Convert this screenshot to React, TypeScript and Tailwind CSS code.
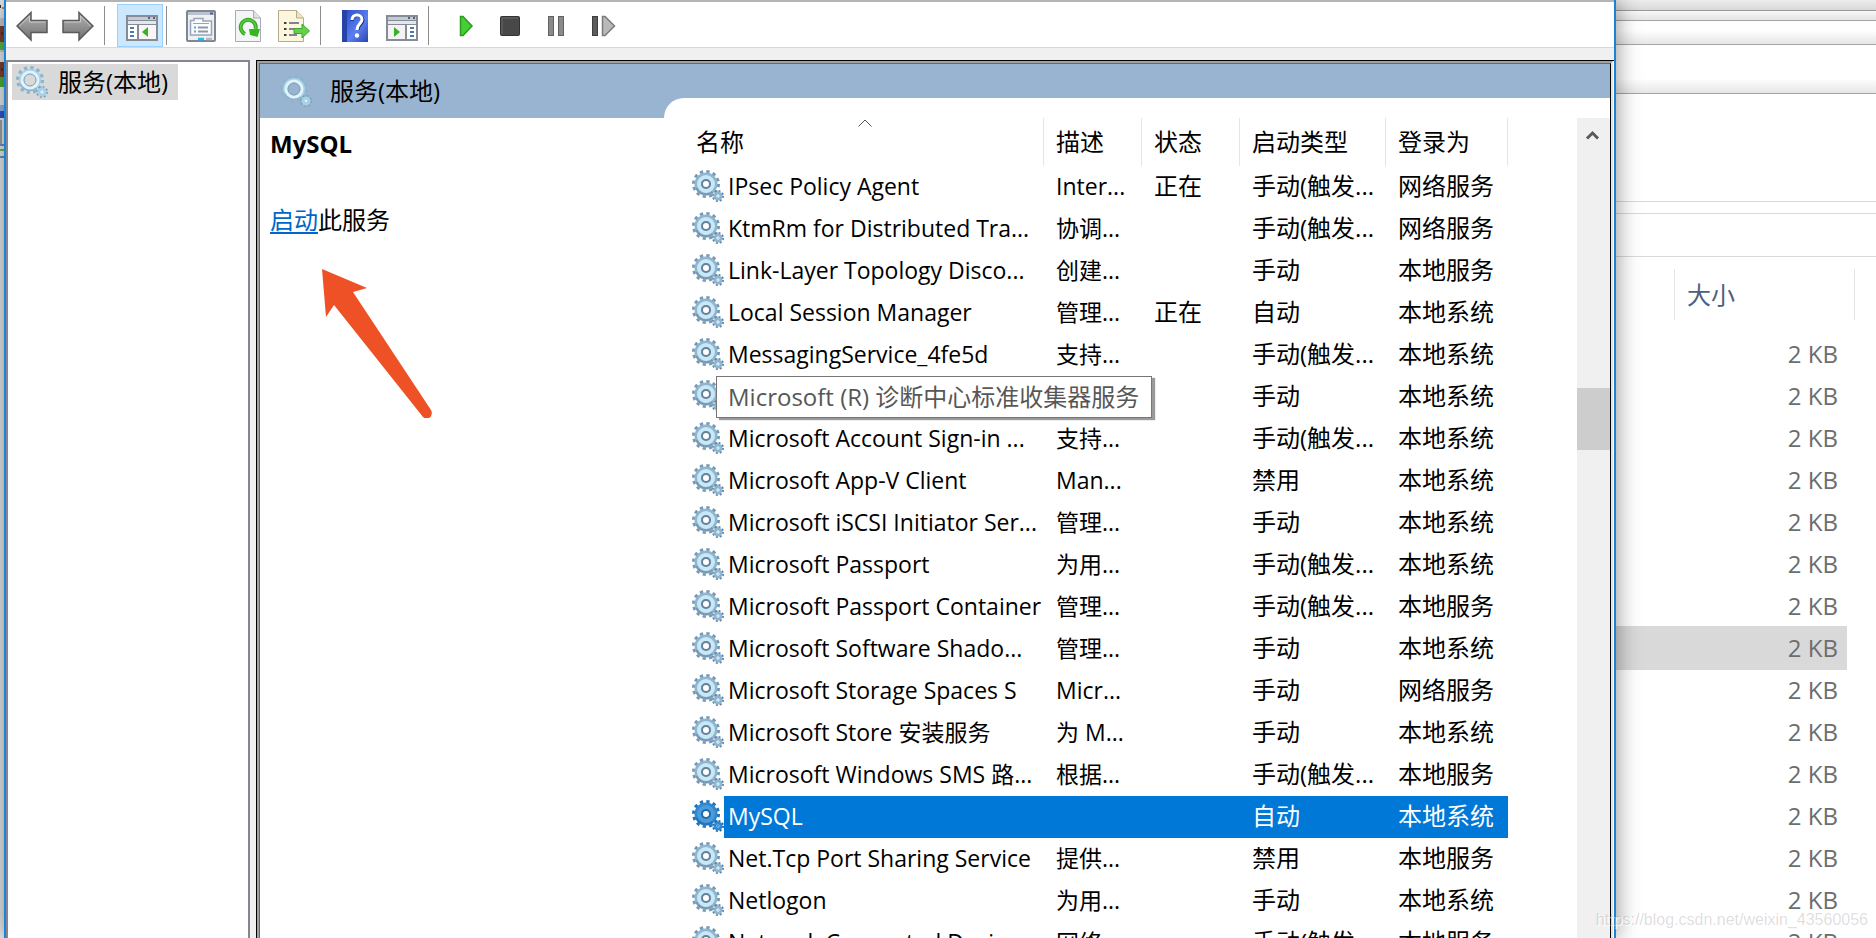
import type { ReactNode } from 'react';

interface Service {
  name: string;
  desc: string;
  status?: string;
  startup: string;
  logon: string;
  selected?: boolean;
}

const services: Service[] = [
  { name: 'IPsec Policy Agent', desc: 'Inter...', status: '正在', startup: '手动(触发...', logon: '网络服务' },
  { name: 'KtmRm for Distributed Tra...', desc: '协调...', startup: '手动(触发...', logon: '网络服务' },
  { name: 'Link-Layer Topology Disco...', desc: '创建...', startup: '手动', logon: '本地服务' },
  { name: 'Local Session Manager', desc: '管理...', status: '正在', startup: '自动', logon: '本地系统' },
  { name: 'MessagingService_4fe5d', desc: '支持...', startup: '手动(触发...', logon: '本地系统' },
  { name: '', desc: '', startup: '手动', logon: '本地系统' },
  { name: 'Microsoft Account Sign-in ...', desc: '支持...', startup: '手动(触发...', logon: '本地系统' },
  { name: 'Microsoft App-V Client', desc: 'Man...', startup: '禁用', logon: '本地系统' },
  { name: 'Microsoft iSCSI Initiator Ser...', desc: '管理...', startup: '手动', logon: '本地系统' },
  { name: 'Microsoft Passport', desc: '为用...', startup: '手动(触发...', logon: '本地系统' },
  { name: 'Microsoft Passport Container', desc: '管理...', startup: '手动(触发...', logon: '本地服务' },
  { name: 'Microsoft Software Shado...', desc: '管理...', startup: '手动', logon: '本地系统' },
  { name: 'Microsoft Storage Spaces S', desc: 'Micr...', startup: '手动', logon: '网络服务' },
  { name: 'Microsoft Store 安装服务', desc: '为 M...', startup: '手动', logon: '本地系统' },
  { name: 'Microsoft Windows SMS 路...', desc: '根据...', startup: '手动(触发...', logon: '本地服务' },
  { name: 'MySQL', desc: '', startup: '自动', logon: '本地系统', selected: true },
  { name: 'Net.Tcp Port Sharing Service', desc: '提供...', startup: '禁用', logon: '本地服务' },
  { name: 'Netlogon', desc: '为用...', startup: '手动', logon: '本地系统' },
  { name: 'Network Connected Devi...', desc: '网络...', startup: '手动(触发...', logon: '本地服务' },
];

const columns = ['描述', '状态', '启动类型', '登录为'];

const SELECTED_FILE = 7;

const Gear = ({ tone = 'normal' }: { tone?: 'normal' | 'pale' | 'selected' }) => {
  const tones = {
    normal: { teeth: '#7899b6', body: '#8fb6d0', ring: '#c9e8f5', rim: '#6581a0', hole: '#ffffff' },
    pale: { teeth: '#8fb3cc', body: '#a5d2e8', ring: '#dff3fa', rim: '#829fb4', hole: 'none' },
    selected: { teeth: '#1f74bb', body: '#2f87cd', ring: '#4a9bdb', rim: '#2068aa', hole: '#ffffff' },
  };
  const c = tones[tone];
  const pale = tone === 'pale';

  return (
    <svg viewBox="0 0 32 32" className="block size-8 shrink-0" fill="none">
      <circle cx="14" cy="14" r="12" stroke={c.teeth} strokeWidth="4" strokeDasharray="3.14 3.14" />
      <circle cx="14" cy="14" r={pale ? 9 : 8} stroke={c.body} strokeWidth={pale ? 4 : 7} />
      <path d="M4.500 18a10.500 10.500 0 0 0 16 4" stroke={c.teeth} strokeWidth="2" />
      <circle cx="14" cy="14" r={pale ? 8 : 7} stroke={c.ring} strokeWidth={pale ? 3 : 4} />
      <circle cx="14" cy="14" r={pale ? 6 : 4} fill={c.hole} stroke={c.rim} strokeWidth={pale ? 1 : 2} />
      <circle cx="26" cy="26" r="4.800" stroke={c.rim} strokeWidth="2.400" strokeDasharray="1.880 1.880" />
      <circle cx="26" cy="26" r="3" stroke={c.body} strokeWidth="3" />
      <circle cx="26" cy="26" r="1.400" fill={c.ring} />
    </svg>
  );
};

const Arrow = ({ flip }: { flip?: boolean }) => (
  <svg viewBox="0 0 32 32" className={`size-8 ${flip ? '-scale-x-100' : ''}`}>
    <defs>
      <linearGradient id="arrow" x1="0" y1="0" x2="0" y2="1">
        <stop offset="0" stopColor="#b5b5b5" />
        <stop offset="1" stopColor="#6f6f6f" />
      </linearGradient>
    </defs>
    <path d="M1 16 15 2.500V10.500H31V22.500H15V30z" fill="url(#arrow)" stroke="#5a5a5a" strokeWidth="1.500" />
    <path d="M3.500 16 13.500 6V12H29.500" fill="none" stroke="#c9c9c9" />
  </svg>
);

const TreeIcon = () => (
  <svg viewBox="0 0 32 32" className="size-8" shapeRendering="crispEdges">
    <rect x="0" y="5" width="32" height="26" fill="#868b95" />
    <rect x="2" y="7" width="28" height="3" fill="#c3cbd6" />
    <path d="M22 7h2v2h-2zM27 7h2v2h-2z" fill="#51627c" />
    <rect x="2" y="11" width="28" height="3" fill="#e4e7eb" />
    <rect x="2" y="15" width="9" height="14" fill="#fff" />
    <rect x="13" y="15" width="17" height="14" fill="#f6f6f6" />
    <path d="M4 17h4v2H4zM4 21h4v2H4zM4 25h4v2H4z" fill="#4a78b5" />
    <path d="M22 17v10l-6-5z" fill="#3fae29" shapeRendering="auto" />
  </svg>
);

const ActionPaneIcon = () => (
  <svg viewBox="0 0 32 32" className="size-8" shapeRendering="crispEdges">
    <rect x="0" y="5" width="32" height="26" fill="#868b95" />
    <rect x="2" y="7" width="28" height="3" fill="#c3cbd6" />
    <path d="M22 7h2v2h-2zM27 7h2v2h-2z" fill="#51627c" />
    <rect x="2" y="11" width="28" height="3" fill="#e4e7eb" />
    <rect x="2" y="15" width="17" height="14" fill="#f3f3f3" />
    <rect x="21" y="15" width="9" height="14" fill="#fff" />
    <path d="M24 17h4v2h-4zM24 21h4v2h-4zM24 25h4v2h-4z" fill="#4a78b5" />
    <path d="M8 17v10l6-5z" fill="#3fae29" shapeRendering="auto" />
  </svg>
);

const PropertiesIcon = () => (
  <svg viewBox="0 0 32 32" className="size-8" fill="none">
    <rect x="1" y="1" width="28" height="30" rx="1" fill="#eef0f2" stroke="#7e8691" strokeWidth="2" />
    <path d="M2 3.500H28" stroke="#b9c3d0" strokeWidth="3" />
    <path d="M24 3.500h3" stroke="#51627c" strokeWidth="2" />
    <path d="M4.500 25V10.500H8V8.500H17V11H25.500V25z" fill="#fafbfc" stroke="#9aa3bd" strokeWidth="1.500" />
    <path d="M7 13.500H23" stroke="#9aa3bd" />
    <path d="M8 17.500h2" stroke="#18c4f0" strokeWidth="2" />
    <path d="M8 21.500h2M12 17.500H22M12 21.500H22" stroke="#8d98a8" strokeWidth="2" />
    <path d="M12 29h6" stroke="#18c4f0" strokeWidth="2.500" />
    <path d="M20 29h6" stroke="#b4bac1" strokeWidth="2.500" />
  </svg>
);

const RefreshIcon = () => (
  <svg viewBox="0 0 32 32" className="size-8" fill="none">
    <path d="M3.500 .5H21.500L28.500 8V31.500H3.500z" fill="#f4f5f6" stroke="#a9abae" />
    <path d="M21.500 .5V8H28.500" fill="#dfe1e3" stroke="#a9abae" />
    <path d="M13 24A7.500 7.500 0 1 1 23.500 19" stroke="#35a823" strokeWidth="4" />
    <path d="M13 24A7.500 7.500 0 1 1 23.500 19" stroke="#57cc40" strokeWidth="1.500" />
    <path d="M17 19 28 19 25.500 27 18 25z" fill="#35b51f" />
  </svg>
);

const ExportIcon = () => (
  <svg viewBox="0 0 32 32" className="size-8" fill="none">
    <path d="M.5 .5H18.500L25.500 8V31.500H.5z" fill="#fcf6dc" stroke="#b5ab93" />
    <path d="M18.500 .5V8H25.500" fill="#eee3bf" stroke="#b5ab93" />
    <path d="M6 13h2.500M6 19h2.500M6 25h2.500" stroke="#3c3c46" strokeWidth="2" />
    <path d="M11 13H21M11 19H17M11 25H19" stroke="#84809c" strokeWidth="2" />
    <path d="M16 18.500H24V14L31.500 21 24 28V23.500H16z" fill="#62d048" stroke="#3fa62c" />
  </svg>
);

const HelpIcon = () => (
  <svg viewBox="0 0 32 32" className="size-8" fill="none">
    <defs>
      <linearGradient id="help" x1="0" y1="0" x2="1" y2="1">
        <stop offset="0" stopColor="#2747c4" />
        <stop offset=".6" stopColor="#5b7ff0" />
        <stop offset="1" stopColor="#2b45ae" />
      </linearGradient>
    </defs>
    <rect x="2" width="26" height="32" fill="url(#help)" />
    <path d="M2 0H7V32H2z" fill="#2743a8" />
    <path d="M12 11C12 3.500 23 4 23 10C23 14 18 14.500 18 20" stroke="#1d2f80" strokeWidth="3" />
    <path d="M12 10C12 3 22 3.500 22 9.500C22 13.500 17 14 17 20" stroke="#fff" strokeWidth="3" />
    <circle cx="17" cy="25.500" r="2.200" fill="#fff" />
  </svg>
);

const PlayIcon = () => (
  <svg viewBox="0 0 32 32" className="size-8">
    <path d="M12.500 6.500H15L24 16 15 25.500H12.500z" fill="#45cf33" stroke="#2c9a20" strokeWidth="1.500" />
  </svg>
);

const StopIcon = () => (
  <svg viewBox="0 0 32 32" className="size-8">
    <rect x="6.500" y="6.500" width="19" height="19" rx="1" fill="#484848" stroke="#333" />
    <path d="M8 24V8H24" fill="none" stroke="#6b6b6b" />
  </svg>
);

const PauseIcon = () => (
  <svg viewBox="0 0 32 32" className="size-8" fill="#8a8a8a" stroke="#626262">
    <rect x="8.500" y="6.500" width="5" height="19" />
    <rect x="18.500" y="6.500" width="5" height="19" />
  </svg>
);

const RestartIcon = () => (
  <svg viewBox="0 0 32 32" className="size-8">
    <rect x="6.500" y="6.500" width="5" height="19" fill="#5c5c5c" stroke="#3e3e3e" />
    <path d="M16.500 6.500H19L28.500 16 19 25.500H16.500z" fill="#b9b9b9" stroke="#7b7b7b" strokeWidth="1.500" />
  </svg>
);

const ToolButton = ({ label, active, children }: { label: string; active?: boolean; children: ReactNode }) => (
  <button
    type="button"
    aria-label={label}
    className={`flex w-[46px] items-center justify-center border ${
      active ? 'border-[#99d1ff] bg-[#cce8ff] pl-1' : 'border-transparent'
    }`}
  >
    {children}
  </button>
);

const Separator = () => <div className="my-0.5 mr-3 ml-[3px] w-px bg-[#8c8c8c]" />;

const Toolbar = () => (
  <div className="flex h-12 shrink-0 border-t-2 border-b border-t-[#b4b4b4] border-b-[#d8d8d8] bg-white pt-0.5 pl-[3px]">
    <ToolButton label="后退"><Arrow /></ToolButton>
    <ToolButton label="前进"><Arrow flip /></ToolButton>
    <Separator />
    <ToolButton label="显示/隐藏控制台树" active><TreeIcon /></ToolButton>
    <Separator />
    <ToolButton label="属性"><PropertiesIcon /></ToolButton>
    <ToolButton label="刷新"><RefreshIcon /></ToolButton>
    <ToolButton label="导出列表"><ExportIcon /></ToolButton>
    <Separator />
    <ToolButton label="帮助"><HelpIcon /></ToolButton>
    <ToolButton label="显示/隐藏操作窗格"><ActionPaneIcon /></ToolButton>
    <Separator />
    <ToolButton label="启动服务"><PlayIcon /></ToolButton>
    <ToolButton label="停止服务"><StopIcon /></ToolButton>
    <ToolButton label="暂停服务"><PauseIcon /></ToolButton>
    <ToolButton label="重启动服务"><RestartIcon /></ToolButton>
  </div>
);

const ConsoleTree = () => (
  <nav className="w-[244px] shrink-0 border-2 border-b-0 border-[#848790] bg-white px-1 pt-0.5">
    <button type="button" className="flex h-9 items-center bg-[#d9d9d9] pr-2.5 pl-1">
      <Gear tone="pale" />
      <span className="ml-2.5">服务(本地)</span>
    </button>
  </nav>
);

const ServiceInfo = () => (
  <div className="flex w-[404px] shrink-0 flex-col">
    <div className="flex h-[54px] items-center gap-[18px] bg-[#99b4d1] pl-5">
      <Gear tone="pale" />
      <h1>服务(本地)</h1>
    </div>
    <div className="px-2.5 pt-1.5">
      <h2 className="font-bold">MySQL</h2>
      <p className="mt-9">
        <a href="#start" className="text-[#0066cc] underline decoration-2 underline-offset-3">启动</a>
        此服务
      </p>
    </div>
    <svg viewBox="0 0 112 150" className="mt-7 ml-[61px] h-[150px] w-28" fill="#ee5126">
      <path d="M1 1 46 20 32 24 110 142C113 147 107 154 102 149L13 37 5 49z" />
    </svg>
  </div>
);

const ServiceRow = ({ service }: { service: Service }) => {
  const cell = service.selected ? 'bg-[#0078d7] text-white' : '';

  return (
    <tr className="h-[42px] align-top">
      <td className="p-0 pt-1">
        <Gear tone={service.selected ? 'selected' : 'normal'} />
      </td>
      <td className={`p-0 pl-1 text-[23px]/10 ${cell}`}>{service.name}</td>
      <td className={`p-0 pl-3 text-[23px]/10 ${cell}`}>{service.desc}</td>
      <td className={`p-0 pl-3 ${cell}`}>{service.status}</td>
      <td className={`p-0 pl-3 ${cell}`}>{service.startup}</td>
      <td className={`p-0 pl-3 ${cell}`}>{service.logon}</td>
    </tr>
  );
};

const ServiceList = () => (
  <div className="flex min-w-0 flex-1 flex-col bg-[#99b4d1] pt-[34px]">
    <div className="flex min-h-0 flex-1 justify-between rounded-tl-[20px] bg-white pt-5 pl-7">
      <div className="relative">
        <table className="w-[816px] table-fixed border-separate border-spacing-0 whitespace-nowrap">
          <colgroup>
            <col className="w-8" />
            <col className="w-80" />
            <col className="w-[98px]" />
            <col className="w-[98px]" />
            <col className="w-[146px]" />
            <col className="w-[122px]" />
          </colgroup>
          <thead>
            <tr className="h-12 text-left">
              <th colSpan={2} className="relative border-r border-[#e5e5e5] p-0 pl-1 font-normal">
                名称
                <svg viewBox="0 0 14 8" className="absolute top-px left-[166px] h-2 w-3.5" fill="none">
                  <path d="M.5 7.500 7 1 13.500 7.500" stroke="#555" />
                </svg>
              </th>
              {columns.map((title) => (
                <th key={title} className="border-r border-[#e5e5e5] p-0 pl-3 font-normal">{title}</th>
              ))}
            </tr>
          </thead>
          <tbody>
            {services.map((service, i) => (
              <ServiceRow key={i} service={service} />
            ))}
          </tbody>
        </table>
        <div
          role="tooltip"
          className="absolute top-[258px] left-6 h-[42px] w-[436px] border border-[#767676] bg-white pl-[11px] whitespace-nowrap text-[#575757] shadow-[3px_2px_1px_#9a9a9a]"
        >
          Microsoft (R) 诊断中心标准收集器服务
        </div>
      </div>
      <div className="w-[33px] shrink-0 bg-[#f0f0f0]">
        <svg viewBox="0 0 33 34" className="h-[34px] w-full" fill="none">
          <path d="M10 20.500 15.500 15 21 20.500" stroke="#5a5a5a" strokeWidth="3" />
        </svg>
        <div className="mt-[236px] h-[62px] bg-[#cdcdcd]" />
      </div>
    </div>
  </div>
);

const ServicesWindow = () => (
  <div className="relative z-10 flex min-w-0 flex-1 flex-col border-x-2 border-[#1883d7] bg-[#f0f0f0] shadow-[0_0_22px_rgba(0,0,0,0.45)]">
    <Toolbar />
    <div className="mt-3 flex min-h-0 flex-1 gap-1.5">
      <ConsoleTree />
      <div className="flex min-w-0 flex-1 border-t border-l border-black bg-white pr-px">
        <div className="flex min-w-0 flex-1 border-t-2 border-r-2 border-l-2 border-[#a0a0a0] border-r-[#e3e3e3]">
          <div className="flex min-w-0 flex-1 border-t border-r border-l border-[#696969] border-r-black">
            <ServiceInfo />
            <ServiceList />
          </div>
        </div>
      </div>
    </div>
  </div>
);

const FilesWindow = () => (
  <div className="flex w-[260px] shrink-0 flex-col bg-white">
    <div className="h-[11px] shrink-0 border-b border-[#999] bg-linear-to-b from-[#ececec] to-[#d9d9d9]" />
    <div className="h-2.5 shrink-0 border-b border-[#a5a5a5] bg-linear-to-b from-[#f8f8f8] to-[#e4e4e4]" />
    <div className="h-6 shrink-0 border-b border-[#a5a5a5] bg-linear-to-b from-white from-40% to-[#e6e6e6]" />
    <div className="h-[49px] shrink-0 border-b border-[#a5a5a5] bg-linear-to-b from-white from-70% to-[#e6e6e6]" />
    <div className="h-[108px] shrink-0 border-b border-[#d9d9d9]" />
    <div className="h-3 shrink-0 border-b border-[#d9d9d9]" />
    <div className="h-[43px] shrink-0 border-b border-[#d9d9d9]" />
    <div className="mt-3 flex h-[51px] shrink-0 items-center pr-[21px] pl-[58px] text-[#4c607a]">
      <h2 className="h-full flex-1 border-x border-[#e5e5e5] pl-3 leading-[51px]">大小</h2>
    </div>
    <ul className="mt-[13px] mr-[30px] text-right leading-[42px] text-[#6d6d6d]">
      {Array.from({ length: 15 }, (_, i) => (
        <li
          key={i}
          className={`h-[42px] pr-2 ${
            i === SELECTED_FILE ? 'bg-[#d9d9d9] shadow-[0_0_0_1px_#d9d9d9]' : ''
          }`}
        >
          2 KB
        </li>
      ))}
    </ul>
  </div>
);

// Sliver of the desktop icons behind the window
const DesktopEdge = () => (
  <svg viewBox="0 0 4 180" className="h-[180px] w-1 shrink-0" shapeRendering="crispEdges">
    <rect width="4" height="180" fill="#ececec" />
    <rect y="5" width="1" height="3" fill="#333" />
    <rect x="2" y="7" width="2" height="2" fill="#d9961f" />
    <rect y="18" width="4" height="34" fill="#cfcfcf" />
    <rect y="26" width="4" height="17" fill="#84402f" />
    <rect x="1" y="32" width="2" height="3" fill="#5d2d22" />
    <rect y="42" width="4" height="8" fill="#5cbc3f" />
    <rect y="62" width="4" height="15" fill="#84402f" />
    <rect x="1" y="68" width="2" height="3" fill="#5d2d22" />
    <rect y="77" width="4" height="10" fill="#4fb534" />
    <rect y="105" width="4" height="6" fill="#9db8f2" />
    <rect y="111" width="4" height="7" fill="#3157cf" />
    <rect y="120" width="2" height="24" fill="#a3a3a3" />
    <rect y="144" width="4" height="2" fill="#6f93c9" />
    <rect y="149" width="4" height="2" fill="#6cc057" />
    <rect y="156" width="4" height="2" fill="#6f93c9" />
  </svg>
);

const App = () => (
  <main className="relative flex h-screen overflow-hidden bg-[#ececec] font-['Open_Sans','Noto_Sans_CJK_SC',sans-serif] text-2xl/10 text-black">
    <DesktopEdge />
    <ServicesWindow />
    <FilesWindow />
    <p className="absolute right-2 bottom-1.5 z-20 font-['Liberation_Sans',Arial,sans-serif] text-base text-black/15 [text-shadow:1px_1px_1px_#fff]">
      https://blog.csdn.net/weixin_43560056
    </p>
  </main>
);

export default App;
